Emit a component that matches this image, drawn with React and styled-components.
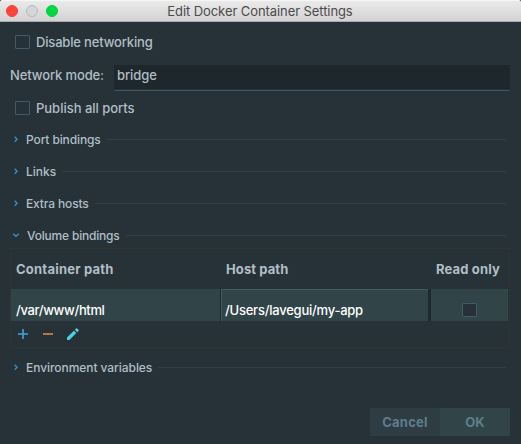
import React from 'react';
import styled, { createGlobalStyle } from 'styled-components';

const GlobalStyle = createGlobalStyle`
  * { box-sizing: border-box; }
  body { margin: 0; background: #263238; }
`;

const Window = styled.div`
  width: 521px;
  height: 444px;
  display: flex;
  flex-direction: column;
  background: #263238;
  color: #b0bec5;
  font: 500 13px/16px Inter, sans-serif;
  overflow: hidden;
`;

const TitleBar = styled.header`
  height: 22px;
  flex: none;
  display: grid;
  grid-template-columns: 60px 1fr 61px;
  align-items: center;
  border-top: 1px solid #f6f6f6;
  border-bottom: 1px solid #aaa;
  border-radius: 2px 2px 0 0;
  background: linear-gradient(#eaeaea, #d3d3d3);
`;

const Lights = styled.div`
  display: flex;
  gap: 8px;
  padding-left: 6px;
`;

const Light = styled.i`
  width: 12px;
  height: 12px;
  border-radius: 50%;
  background: ${(p) => p.$fill};
  border: 1px solid ${(p) => p.$edge};
`;

const Title = styled.h1`
  margin: 0;
  text-align: center;
  color: #4b4b4b;
  font-size: 13px;
  font-weight: 400;
  line-height: 18px;
  letter-spacing: -0.08px;
`;

const Text = styled.span`
  letter-spacing: ${(p) => p.$track || 0}px;
  white-space: nowrap;
`;

const Form = styled.main`
  flex: 1;
  display: flex;
  flex-direction: column;
  padding: 12px 11px 0 10px;
`;

const CheckRow = styled.label`
  height: 16px;
  display: flex;
  align-items: center;
  gap: 6px;
  padding-left: 5px;
`;

const Box = styled.span`
  width: 15px;
  height: 14px;
  flex: none;
  border: 1px solid #41596a;
  border-radius: 1px;
  background: #263238;
`;

const FieldRow = styled.div`
  height: 26px;
  margin: 15px 0 9px;
  display: flex;
`;

const FieldLabel = styled.label`
  width: 104px;
  padding-top: 2px;
`;

const Field = styled.div`
  flex: 1;
  display: flex;
  flex-direction: column;
`;

const FieldValue = styled.div`
  height: 24px;
  padding: 2px 3px 0;
  background: #1e272c;
`;

const Underline = styled.div`
  height: 1px;
  margin: 1px 1px 0;
  background: #415767;
`;

const Sections = styled.div`
  display: flex;
  flex-direction: column;
  gap: 15px;
  padding: 15px 0 4px;
`;

const SectionHead = styled.div`
  height: 17px;
  flex: none;
  display: flex;
  align-items: center;
  font-size: 12px;
  line-height: 17px;
  padding-right: 4px;
`;

const Arrow = styled.svg`
  width: 8px;
  height: 8px;
  flex: none;
  margin: 0 ${(p) => (p.$open ? 7 : 6)}px 1px 2px;
  fill: none;
  stroke: #3b8fc9;
  stroke-width: 1.3;
`;

const Rule = styled.div`
  flex: 1;
  height: 1px;
  margin-left: 6px;
  background: #2e3f49;
`;

const Table = styled.section`
  height: 100px;
  flex: none;
  margin-bottom: 11px;
  border: 1px solid #323333;
  display: flex;
  flex-direction: column;
`;

const HeadRow = styled.div`
  height: 40px;
  display: grid;
  grid-template-columns: 209px 210px 78px;
  align-items: center;
  font-weight: 700;
`;

const HeadCell = styled.div`
  padding-left: ${(p) => p.$pad}px;
`;

const BodyRow = styled.div`
  height: 32px;
  display: grid;
  grid-template-columns: 209px 1px 207px 3px 77px;
  color: #fff;
`;

const Cell = styled.div`
  background: #314549;
  padding: 13px 0 0 5px;
`;

const EditorCell = styled(Cell)`
  padding: 12px 0 0 3px;
  border-top: 1px solid #455a64;
  border-left: 1px solid #455a64;
`;

const CheckCell = styled.div`
  background: #314549;
  display: flex;
  justify-content: center;
  padding-top: 14px;
`;

const Gap = styled.div`
  background: #1f292e;
`;

const Tools = styled.div`
  display: flex;
  align-items: center;
  height: 26px;
  padding-left: 5px;
  gap: 11px;
`;

const ToolIcon = styled.svg`
  width: 14px;
  height: 14px;
  flex: none;
`;

const Actions = styled.footer`
  display: flex;
  justify-content: flex-end;
  margin-top: 32px;
`;

const Button = styled.button`
  width: 70px;
  height: 28px;
  padding: 0;
  border: 0;
  border-radius: ${(p) => (p.$primary ? '0 1px 1px 0' : '1px 0 0 1px')};
  background: ${(p) => (p.$primary ? '#314549' : '#2e3c43')};
  color: #607d8b;
  font: 700 13px/28px Inter, sans-serif;
`;

function Section({ title, track, open }) {
  return (
    <SectionHead>
      <Arrow viewBox="0 0 8 8" $open={open}>
        <path d={open ? 'M1.2 2.7 L4 5.3 L6.8 2.7' : 'M2.7 1.7 L5.1 4.2 L2.7 6.7'} />
      </Arrow>
      <Text $track={track}>{title}</Text>
      <Rule />
    </SectionHead>
  );
}

export default function App() {
  return (
    <>
      <GlobalStyle />
      <Window>
        <TitleBar>
          <Lights>
            <Light $fill="#ff443e" $edge="#f6403b" />
            <Light $fill="#d4d6d8" $edge="#b8babc" />
            <Light $fill="#00d742" $edge="#00cd3e" />
          </Lights>
          <Title>Edit Docker Container Settings</Title>
        </TitleBar>
        <Form>
          <CheckRow><Box /><Text $track={-0.17}>Disable networking</Text></CheckRow>
          <FieldRow>
            <FieldLabel><Text $track={-0.12}>Network mode:</Text></FieldLabel>
            <Field>
              <FieldValue><Text $track={-0.08}>bridge</Text></FieldValue>
              <Underline />
            </Field>
          </FieldRow>
          <CheckRow><Box /><Text $track={-0.02}>Publish all ports</Text></CheckRow>
          <Sections>
            <Section title="Port bindings" track={-0.12} />
            <Section title="Links" />
            <Section title="Extra hosts" track={-0.14} />
            <Section title="Volume bindings" track={-0.19} open />
          </Sections>
          <Table>
            <HeadRow>
              <HeadCell $pad={5}><Text $track={0.22}>Container path</Text></HeadCell>
              <HeadCell $pad={6}><Text $track={0.1}>Host path</Text></HeadCell>
              <HeadCell $pad={6}><Text $track={0.15}>Read only</Text></HeadCell>
            </HeadRow>
            <BodyRow>
              <Cell><Text $track={-0.36}>/var/www/html</Text></Cell>
              <Gap />
              <EditorCell><Text $track={-0.24}>/Users/lavegui/my-app</Text></EditorCell>
              <Gap />
              <CheckCell><Box /></CheckCell>
            </BodyRow>
            <Tools>
              <ToolIcon viewBox="0 0 14 14">
                <path d="M6.2 2h1.6v4.2H12v1.6H7.8V12H6.2V7.8H2V6.2h4.2z" fill="#42a5dc" />
              </ToolIcon>
              <ToolIcon viewBox="0 0 14 14">
                <path d="M2 6h10v2H2z" fill="#b5754a" />
              </ToolIcon>
              <ToolIcon viewBox="0 0 14 14">
                <path d="M1 10.6V13h2.4L10.3 6.1 7.9 3.7zM12.5 3.9a.8.8 0 0 0 0-1.1L11.2 1.5a.8.8 0 0 0-1.1 0L8.8 2.8l2.4 2.4z" fill="#4dd0e1" />
              </ToolIcon>
            </Tools>
          </Table>
          <Section title="Environment variables" track={-0.06} />
          <Actions>
            <Button><Text $track={0.25}>Cancel</Text></Button>
            <Button $primary><Text>OK</Text></Button>
          </Actions>
        </Form>
      </Window>
    </>
  );
}
